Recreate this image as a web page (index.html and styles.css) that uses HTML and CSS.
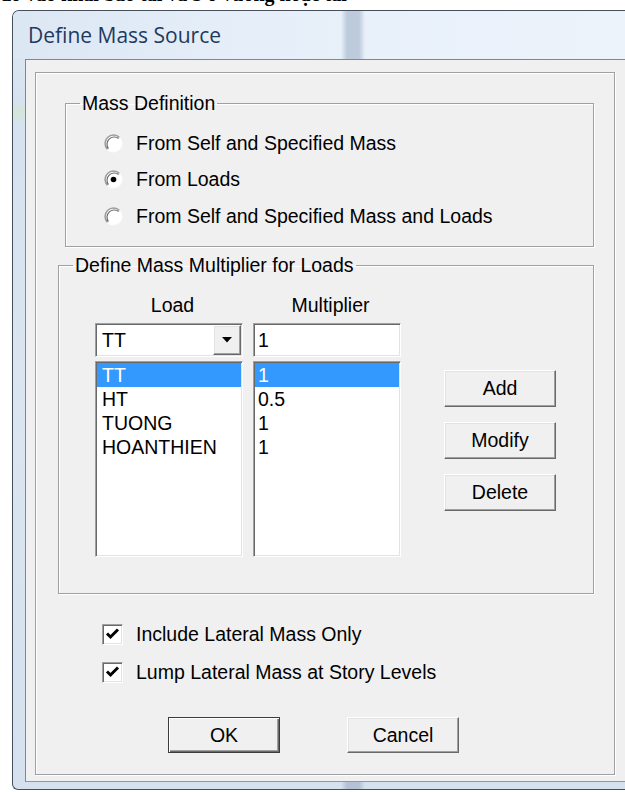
FILE: index.html
```html
<!DOCTYPE html>
<html lang="vi">
<head>
<meta charset="utf-8">
<title>Define Mass Source</title>
<link rel="stylesheet" href="styles.css">
</head>
<body>
<div class="doc-strip"><p>đồ vào khai báo tải và 3 ô vuông hoặc tải</p></div>

<div class="window">
  <div class="titlebar"><span class="title">Define Mass Source</span></div>

  <div class="client">
    <div class="panel">

      <fieldset class="group group-mass">
        <legend>Mass Definition</legend>
        <div class="radio-list">
          <label class="radio">
            <svg class="radio-mark" viewBox="0 0 19 19"><circle cx="9.5" cy="9.5" r="8.5" fill="#fff"/><path d="M3.49 15.51A8.5 8.5 0 0 1 15.51 3.49" fill="none" stroke="#9c9c9c" stroke-width="1.5"/><path d="M4.4 14.6A7.3 7.3 0 0 1 14.6 4.4" fill="none" stroke="#6c6c6c" stroke-width="1.2"/><path d="M15.51 3.49A8.5 8.5 0 0 1 3.49 15.51" fill="none" stroke="#fcfcfc" stroke-width="1.2"/></svg>
            <span>From Self and Specified Mass</span>
          </label>
          <label class="radio">
            <svg class="radio-mark" viewBox="0 0 19 19"><circle cx="9.5" cy="9.5" r="8.5" fill="#fff"/><path d="M3.49 15.51A8.5 8.5 0 0 1 15.51 3.49" fill="none" stroke="#9c9c9c" stroke-width="1.5"/><path d="M4.4 14.6A7.3 7.3 0 0 1 14.6 4.4" fill="none" stroke="#6c6c6c" stroke-width="1.2"/><path d="M15.51 3.49A8.5 8.5 0 0 1 3.49 15.51" fill="none" stroke="#fcfcfc" stroke-width="1.2"/><circle cx="9.5" cy="9.5" r="2.8" fill="#000"/></svg>
            <span>From Loads</span>
          </label>
          <label class="radio">
            <svg class="radio-mark" viewBox="0 0 19 19"><circle cx="9.5" cy="9.5" r="8.5" fill="#fff"/><path d="M3.49 15.51A8.5 8.5 0 0 1 15.51 3.49" fill="none" stroke="#9c9c9c" stroke-width="1.5"/><path d="M4.4 14.6A7.3 7.3 0 0 1 14.6 4.4" fill="none" stroke="#6c6c6c" stroke-width="1.2"/><path d="M15.51 3.49A8.5 8.5 0 0 1 3.49 15.51" fill="none" stroke="#fcfcfc" stroke-width="1.2"/></svg>
            <span>From Self and Specified Mass and Loads</span>
          </label>
        </div>
      </fieldset>

      <fieldset class="group group-mult">
        <legend>Define Mass Multiplier for Loads</legend>
        <div class="mult-grid">
          <div class="col-head c1">Load</div>
          <div class="col-head c2">Multiplier</div>

          <div class="combo sunken c1">
            <span class="combo-text">TT</span>
            <span class="combo-btn raised"><svg viewBox="0 0 10 6" class="combo-arrow"><polygon points="0,0 10,0 5,5.5" fill="#000"/></svg></span>
          </div>
          <div class="textbox sunken c2">1</div>

          <ul class="listbox sunken c1">
            <li class="selected">TT</li>
            <li>HT</li>
            <li>TUONG</li>
            <li>HOANTHIEN</li>
          </ul>
          <ul class="listbox listbox-num sunken c2">
            <li class="selected">1</li>
            <li>0.5</li>
            <li>1</li>
            <li>1</li>
          </ul>
          <div class="side-buttons c3">
            <button class="btn raised" type="button">Add</button>
            <button class="btn raised" type="button">Modify</button>
            <button class="btn raised" type="button">Delete</button>
          </div>
        </div>
      </fieldset>

      <div class="checks">
        <label class="check">
          <span class="check-box sunken"><svg viewBox="0 0 17 17"><polyline points="3,7.5 6.5,11 14,3.5" fill="none" stroke="#000" stroke-width="3"/></svg></span>
          <span>Include Lateral Mass Only</span>
        </label>
        <label class="check">
          <span class="check-box sunken"><svg viewBox="0 0 17 17"><polyline points="3,7.5 6.5,11 14,3.5" fill="none" stroke="#000" stroke-width="3"/></svg></span>
          <span>Lump Lateral Mass at Story Levels</span>
        </label>
      </div>

      <div class="actions">
        <button class="btn-main raised default" type="button">OK</button>
        <button class="btn-main raised" type="button">Cancel</button>
      </div>

    </div>
  </div>
  <div class="bottom-frame"></div>
</div>
</body>
</html>
```

FILE: styles.css
```css
* { box-sizing: border-box; }

html, body { margin: 0; padding: 0; }

body {
  width: 625px;
  height: 792px;
  overflow: hidden;
  background: #fff;
  font-family: "Liberation Sans", Arial, sans-serif;
  font-size: 19.5px;
  color: #000;
}

/* line of the document above the dialog, mostly scrolled off */
.doc-strip { height: 10px; overflow: hidden; }
.doc-strip p {
  margin: -16px 0 0 0;
  font-family: "Liberation Serif", "Times New Roman", serif;
  font-size: 20px;
  font-weight: bold;
  line-height: 20px;
  white-space: nowrap;
}

/* window frame (glass) */
.window {
  margin-left: 12px;
  width: 613px;
  height: 780px;
  border: 1px solid #46505c;
  border-right: none;
  border-radius: 7px 0 0 6px;
  overflow: hidden;
  display: flex;
  flex-direction: column;
  background:
    linear-gradient(to right, transparent 328px, rgba(150,168,192,.55) 334px, rgba(150,168,192,.55) 346px, transparent 352px),
    linear-gradient(to bottom, #dfe9f5 0, #d6e2ef 90px, #d3e6da 100px, #d6e2ef 115px, #dae5f1 400px, #d5e1ee 100%);
}

.titlebar {
  flex: none;
  height: 48px;
  display: flex;
  align-items: center;
  padding-left: 15px;
  background:
    linear-gradient(to right, transparent 328px, rgba(160,178,200,.6) 334px, rgba(160,178,200,.6) 346px, transparent 352px),
    linear-gradient(to right, #dce7f4 0, #e6eff9 40%, #edf3fb 100%);
}

.title {
  font-family: "Open Sans", "Noto Sans", sans-serif;
  font-size: 21px;
  line-height: 1;
  color: #1f3a5d;
}

.client {
  flex: none;
  margin-left: 12px;
  height: 723px;
  border-top: 1px solid #7c8897;
  border-left: 1px solid #7c8897;
  border-bottom: 1px solid #8d98a5;
  background: #f0f0f0;
  padding: 12px 0 0 9px;
}

.bottom-frame { flex: 1; }

/* etched outer panel */
.panel {
  width: 580px;
  height: 703px;
  border: 1px solid #a0a0a0;
  box-shadow: inset 1px 1px 0 #fff, 1px 1px 0 #fff;
}

/* group boxes */
.group {
  margin: 0;
  padding: 0;
  min-width: 0;
  border: 1px solid #a0a0a0;
  box-shadow: inset 1px 1px 0 #fff, 1px 1px 0 #fff;
}

.group legend {
  margin-left: 14px;
  padding: 0 2px;
  height: 22px;
  line-height: 22px;
}

.group-mass {
  margin: 19px 0 0 29px;
  width: 529px;
  height: 155px;
}

.group-mult {
  margin: 7px 0 0 22px;
  width: 536px;
  height: 340px;
}

/* radio buttons */
.radio-list { padding: 11px 0 0 38px; }

.radio {
  display: flex;
  align-items: center;
  gap: 13px;
  height: 36.5px;
}

.radio-mark { width: 19px; height: 19px; flex: none; }

/* load / multiplier editor */
.mult-grid {
  display: grid;
  grid-template-columns: 148px 148px 145px;
  column-gap: 10px;
  padding: 18px 0 0 36px;
}

.c1 { grid-column: 1; }
.c2 { grid-column: 2; }
.c3 { grid-column: 3; grid-row: 3; }

.col-head {
  line-height: 22px;
  text-align: center;
  padding-left: 7px;
}

.sunken {
  background: #fff;
  border: 1px solid;
  border-color: #a0a0a0 #fff #fff #a0a0a0;
  box-shadow: inset 1px 1px 0 #696969, inset -1px -1px 0 #e3e3e3;
}

.raised {
  background: #f0f0f0;
  border: 1px solid;
  border-color: #fff #696969 #696969 #fff;
  box-shadow: inset -1px -1px 0 #a0a0a0, inset 1px 1px 0 #e3e3e3;
}

.combo {
  margin-top: 7px;
  height: 34px;
  padding: 1px;
  display: flex;
}

.combo-text {
  flex: 1;
  display: flex;
  align-items: center;
  padding-left: 5px;
}

.combo-btn {
  width: 28px;
  flex: none;
  display: flex;
  align-items: center;
  justify-content: center;
}

.combo-arrow { width: 10px; height: 6px; }

.textbox {
  margin-top: 7px;
  height: 34px;
  padding: 1px 1px 1px 4px;
  display: flex;
  align-items: center;
}

.listbox {
  margin: 4px 0 0 0;
  padding: 1px;
  list-style: none;
  height: 196px;
}

.listbox li {
  height: 24px;
  line-height: 24px;
  padding-left: 5px;
}

.listbox-num li { padding-left: 3px; }

.listbox li.selected {
  background: #3399ff;
  color: #fff;
}

.side-buttons {
  padding: 13px 0 0 33px;
  display: flex;
  flex-direction: column;
  gap: 15px;
}

.btn, .btn-main {
  font: inherit;
  color: #000;
  padding: 0;
  margin: 0;
  width: 112px;
  height: 37px;
  text-align: center;
}

.btn-main { height: 36px; }

.btn-main.default {
  border: 1px solid #3c3c3c;
  box-shadow: inset 1px 1px 0 #fff, inset -1px -1px 0 #696969, inset -2px -2px 0 #a0a0a0;
}

/* check boxes */
.checks {
  margin-top: 21px;
  padding-left: 66px;
}

.check {
  display: flex;
  align-items: center;
  gap: 13px;
  height: 38px;
}

.check-box {
  width: 21px;
  height: 21px;
  flex: none;
  padding: 1px;
  display: flex;
}

.check-box svg { width: 17px; height: 17px; }

/* OK / Cancel */
.actions {
  margin-top: 26px;
  padding-left: 132px;
  display: flex;
  gap: 67px;
}
```
